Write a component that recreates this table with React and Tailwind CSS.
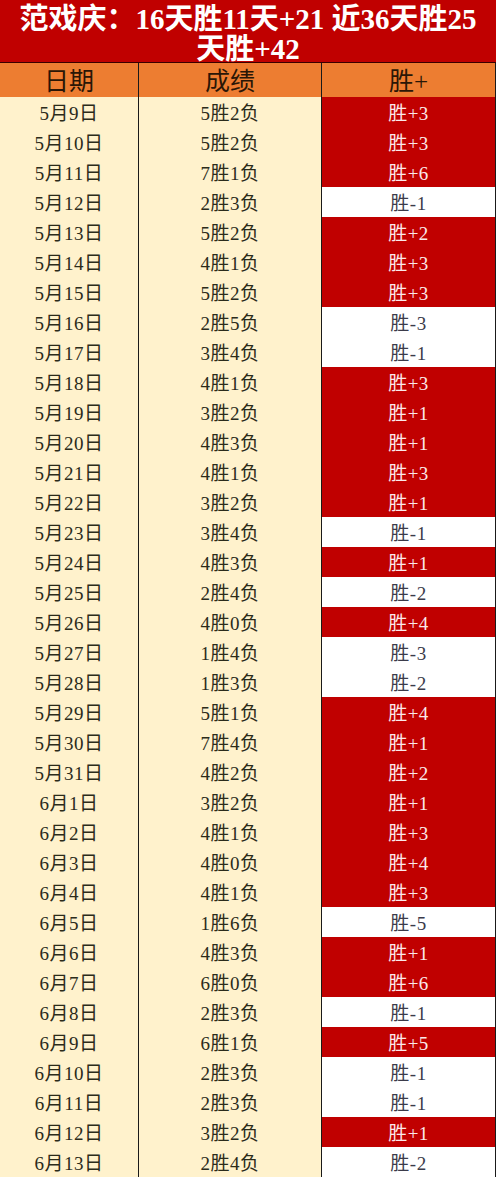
const rows = [
  ['5月9日', '5胜2负', '胜+3'],
  ['5月10日', '5胜2负', '胜+3'],
  ['5月11日', '7胜1负', '胜+6'],
  ['5月12日', '2胜3负', '胜-1'],
  ['5月13日', '5胜2负', '胜+2'],
  ['5月14日', '4胜1负', '胜+3'],
  ['5月15日', '5胜2负', '胜+3'],
  ['5月16日', '2胜5负', '胜-3'],
  ['5月17日', '3胜4负', '胜-1'],
  ['5月18日', '4胜1负', '胜+3'],
  ['5月19日', '3胜2负', '胜+1'],
  ['5月20日', '4胜3负', '胜+1'],
  ['5月21日', '4胜1负', '胜+3'],
  ['5月22日', '3胜2负', '胜+1'],
  ['5月23日', '3胜4负', '胜-1'],
  ['5月24日', '4胜3负', '胜+1'],
  ['5月25日', '2胜4负', '胜-2'],
  ['5月26日', '4胜0负', '胜+4'],
  ['5月27日', '1胜4负', '胜-3'],
  ['5月28日', '1胜3负', '胜-2'],
  ['5月29日', '5胜1负', '胜+4'],
  ['5月30日', '7胜4负', '胜+1'],
  ['5月31日', '4胜2负', '胜+2'],
  ['6月1日', '3胜2负', '胜+1'],
  ['6月2日', '4胜1负', '胜+3'],
  ['6月3日', '4胜0负', '胜+4'],
  ['6月4日', '4胜1负', '胜+3'],
  ['6月5日', '1胜6负', '胜-5'],
  ['6月6日', '4胜3负', '胜+1'],
  ['6月7日', '6胜0负', '胜+6'],
  ['6月8日', '2胜3负', '胜-1'],
  ['6月9日', '6胜1负', '胜+5'],
  ['6月10日', '2胜3负', '胜-1'],
  ['6月11日', '2胜3负', '胜-1'],
  ['6月12日', '3胜2负', '胜+1'],
  ['6月13日', '2胜4负', '胜-2'],
];

const font = "font-['Liberation_Serif','Noto_Sans_CJK_SC',serif]";

function Row({ date, score, result }) {
  const up = result.includes('+');
  return (
    <div className="grid h-[30px] grid-cols-[139px_183px_1fr] text-[19px] leading-[28px] tracking-[0.5px]">
      <div className="border-b border-r border-[#1a1a1a] bg-[#fff2cc] pt-[3px] text-center text-[#2b2b1a]">{date}</div>
      <div className="border-b border-r border-[#1a1a1a] bg-[#fff2cc] pt-[3px] text-center text-[#2b2b1a]">{score}</div>
      <div
        className={
          up
            ? 'border-b border-r border-[#1a1a1a] bg-[#c00000] pt-[3px] text-center text-[#fbe9ea]'
            : 'border-b border-r border-[#1a1a1a] bg-white pt-[3px] text-center text-[#3b3b4a]'
        }
      >
        {result}
      </div>
    </div>
  );
}

export default function App() {
  return (
    <main className={`w-[496px] bg-white ${font}`}>
      <div className="h-[63px] border-b border-[#3a0000] bg-[#c00000] pt-[4px] text-center text-[29px] font-bold leading-[30px] text-white">
        范戏庆：16天胜11天+21&nbsp;近36天胜25
        <br />
        天胜+42
      </div>
      <div className="grid h-[34px] grid-cols-[139px_183px_1fr] bg-[#ed7d31] text-[25px] leading-[33px] text-[#2a1606]">
        <div className="border-b border-r border-[#1a1a1a] pt-[2px] text-center">日期</div>
        <div className="border-b border-r border-[#1a1a1a] pt-[2px] text-center">成绩</div>
        <div className="border-b border-r border-[#1a1a1a] pt-[2px] text-center">胜+</div>
      </div>
      {rows.map(([date, score, result]) => (
        <Row key={date} date={date} score={score} result={result} />
      ))}
    </main>
  );
}
